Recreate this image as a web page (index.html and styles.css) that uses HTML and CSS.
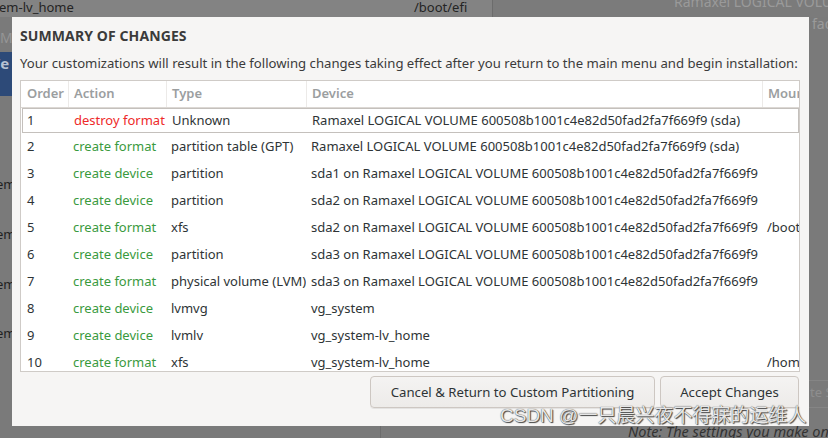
FILE: index.html
```html
<!DOCTYPE html>
<html>
<head>
<meta charset="utf-8">
<link rel="stylesheet" href="styles.css">
</head>
<body>
<div class="desk">
  <div class="bg-top">
    <span class="bg-t1">em-lv_home</span>
    <span class="bg-t2">/boot/efi</span>
    <span class="bg-vline"></span>
    <span class="bg-t3">Ramaxel LOGICAL VOLU</span>
    <span class="bg-t4">fad</span>
  </div>
  <span class="bg-m">M</span>
  <span class="bg-blue">/e</span>
  <span class="bg-em e1">em</span>
  <span class="bg-em e2">em</span>
  <span class="bg-em e3">em</span>
  <span class="bg-em e4">em</span>
  <span class="bg-vline2"></span>
  <span class="bg-hl h1"></span>
  <span class="bg-hl h2"></span>
  <span class="bg-tes">te S</span>
  <span class="bg-note">Note: The settings you make on</span>
</div>

<div class="dialog">
  <h1 class="title">SUMMARY OF CHANGES</h1>
  <p class="subtitle">Your customizations will result in the following changes taking effect after you return to the main menu and begin installation:</p>
  <div class="table">
    <div class="row head">
      <div class="cell c-order">Order</div>
      <div class="cell sep">Action</div>
      <div class="cell sep">Type</div>
      <div class="cell sep">Device</div>
      <div class="cell sep">Mount Point</div>
    </div>
    <div class="row focus">
      <div class="cell c-order">1</div>
      <div class="cell act red">destroy format</div>
      <div class="cell">Unknown</div>
      <div class="cell">Ramaxel LOGICAL VOLUME 600508b1001c4e82d50fad2fa7f669f9 (sda)</div>
      <div class="cell"></div>
    </div>
    <div class="row">
      <div class="cell c-order">2</div>
      <div class="cell act green">create format</div>
      <div class="cell">partition table (GPT)</div>
      <div class="cell">Ramaxel LOGICAL VOLUME 600508b1001c4e82d50fad2fa7f669f9 (sda)</div>
      <div class="cell"></div>
    </div>
    <div class="row">
      <div class="cell c-order">3</div>
      <div class="cell act green">create device</div>
      <div class="cell">partition</div>
      <div class="cell">sda1 on Ramaxel LOGICAL VOLUME 600508b1001c4e82d50fad2fa7f669f9</div>
      <div class="cell"></div>
    </div>
    <div class="row">
      <div class="cell c-order">4</div>
      <div class="cell act green">create device</div>
      <div class="cell">partition</div>
      <div class="cell">sda2 on Ramaxel LOGICAL VOLUME 600508b1001c4e82d50fad2fa7f669f9</div>
      <div class="cell"></div>
    </div>
    <div class="row">
      <div class="cell c-order">5</div>
      <div class="cell act green">create format</div>
      <div class="cell">xfs</div>
      <div class="cell">sda2 on Ramaxel LOGICAL VOLUME 600508b1001c4e82d50fad2fa7f669f9</div>
      <div class="cell">/boot</div>
    </div>
    <div class="row">
      <div class="cell c-order">6</div>
      <div class="cell act green">create device</div>
      <div class="cell">partition</div>
      <div class="cell">sda3 on Ramaxel LOGICAL VOLUME 600508b1001c4e82d50fad2fa7f669f9</div>
      <div class="cell"></div>
    </div>
    <div class="row">
      <div class="cell c-order">7</div>
      <div class="cell act green">create format</div>
      <div class="cell">physical volume (LVM)</div>
      <div class="cell">sda3 on Ramaxel LOGICAL VOLUME 600508b1001c4e82d50fad2fa7f669f9</div>
      <div class="cell"></div>
    </div>
    <div class="row">
      <div class="cell c-order">8</div>
      <div class="cell act green">create device</div>
      <div class="cell">lvmvg</div>
      <div class="cell">vg_system</div>
      <div class="cell"></div>
    </div>
    <div class="row">
      <div class="cell c-order">9</div>
      <div class="cell act green">create device</div>
      <div class="cell">lvmlv</div>
      <div class="cell">vg_system-lv_home</div>
      <div class="cell"></div>
    </div>
    <div class="row">
      <div class="cell c-order">10</div>
      <div class="cell act green">create format</div>
      <div class="cell">xfs</div>
      <div class="cell">vg_system-lv_home</div>
      <div class="cell">/home</div>
    </div>
  </div>
  <div class="buttons">
    <button class="btn btn-cancel">Cancel &amp; Return to Custom Partitioning</button>
    <button class="btn btn-accept">Accept Changes</button>
  </div>
</div>

<div class="watermark">CSDN @一只晨兴夜不得寐的运维人</div>
</body>
</html>
```

FILE: styles.css
```css
html, body {
  margin: 0;
  padding: 0;
}
body {
  width: 828px;
  height: 438px;
  overflow: hidden;
  position: relative;
  background: #7a7a7a;
  font-family: "Noto Sans", "Open Sans", "Noto Sans CJK SC", sans-serif;
  color: #2e3436;
}

/* ---------- dimmed background window ---------- */
.desk {
  position: absolute;
  inset: 0;
  font-size: 13px;
  white-space: nowrap;
}
.bg-top {
  position: absolute;
  left: 0;
  top: 0;
  width: 828px;
  height: 17px;
  background: linear-gradient(to right, #838383 0, #838383 492px, #7b7b7b 492px);
}
.bg-t1 { position: absolute; left: -1px; top: -2px; color: #242424; }
.bg-t2 { position: absolute; left: 414px; top: -2px; color: #242424; }
.bg-vline { position: absolute; left: 492px; top: 0; width: 1px; height: 17px; background: #6c6c6c; }
.bg-t3 { position: absolute; left: 674px; top: -8px; color: #9a9a9a; font-size: 14px; }
.bg-t4 { position: absolute; left: 812px; top: 14px; color: #9a9a9a; font-size: 14px; }
.bg-m { position: absolute; left: 0; top: 28px; color: #969696; font-size: 14px; }
.bg-blue {
  position: absolute;
  left: 0;
  top: 52px;
  width: 12px;
  height: 44px;
  background: #2d4a78;
  color: #b8c2d2;
  font-size: 15px;
  font-weight: 700;
  line-height: 22px;
  text-indent: -6px;
  overflow: hidden;
}
.bg-em { position: absolute; left: -4px; color: #222; font-size: 13px; }
.e1 { top: 175px; }
.e2 { top: 225px; }
.e3 { top: 275px; }
.e4 { top: 324px; }
.bg-vline2 { position: absolute; left: 380px; top: 417px; width: 1px; height: 21px; background: #6c6c6c; }
.bg-hl { position: absolute; left: 809px; width: 19px; height: 1px; background: #858585; }
.h1 { top: 380px; }
.h2 { top: 407px; }
.bg-tes { position: absolute; left: 810px; top: 383px; color: #8e8e8e; font-size: 13px; }
.bg-note {
  position: absolute;
  left: 628px;
  top: 421px;
  color: #333;
  font-style: italic;
  font-size: 14.5px;
}

/* ---------- dialog ---------- */
.dialog {
  position: absolute;
  left: 12px;
  top: 17px;
  width: 780px;
  height: 400px;
  padding: 9px 9px 0 8px;
  background: #f6f5f4;
  display: flex;
  flex-direction: column;
}
.title {
  margin: 0;
  font-size: 14px;
  font-weight: 700;
  line-height: 20px;
  letter-spacing: 0.1px;
  color: #3b3b3b;
}
.subtitle {
  margin: 7px 0 0;
  font-size: 13.15px;
  line-height: 20px;
  color: #3b3b3b;
  white-space: nowrap;
}
.table {
  margin-top: 7px;
  height: 290px;
  border: 1px solid #cfcbc7;
  background: #fff;
  overflow: hidden;
}
.row {
  display: grid;
  grid-template-columns: 47px 98px 140px 456px 200px;
  height: 27px;
  font-size: 13px;
  white-space: nowrap;
}
.cell {
  padding-left: 5px;
  overflow: hidden;
  height: 27px;
  line-height: 27px;
}
.c-order { padding-left: 6px; }
.head {
  height: 26px;
  border-bottom: 1px solid #dcd8d4;
  color: #9b9e9f;
  font-weight: 600;
}
.head .cell { height: 26px; line-height: 24px; }
.head .sep { border-left: 1px solid #eceae8; }
.focus {
  box-shadow: inset 0 0 0 1px #c4c0bc;
  margin-left: 1px;
  height: 25px;
}
.focus .cell { height: 25px; line-height: 25px; }
.focus .c-order { padding-left: 5px; }
.red { color: #ee2a2a; }
.green { color: #3a9a3e; }

.buttons {
  margin-top: 4px;
  display: flex;
  justify-content: flex-end;
  gap: 5px;
  padding-right: 1px;
}
.btn {
  height: 32px;
  border: 1px solid #cdc7c2;
  border-radius: 4px;
  background: linear-gradient(#f4f3f2, #edebe9);
  font-family: inherit;
  font-size: 13.2px;
  color: #2e3436;
  box-shadow: 0 1px 0 rgba(0,0,0,0.07);
}
.btn-cancel { width: 285px; }
.btn-accept { width: 139px; }

/* ---------- watermark ---------- */
.watermark {
  position: absolute;
  left: 500px;
  top: 403px;
  font-size: 19px;
  line-height: 26px;
  color: #e6e6e6;
  white-space: nowrap;
  text-shadow: 0 0 1px #333, 1px 1px 1px #444;
  font-family: "Liberation Sans", "Noto Sans CJK SC", sans-serif;
}
```
